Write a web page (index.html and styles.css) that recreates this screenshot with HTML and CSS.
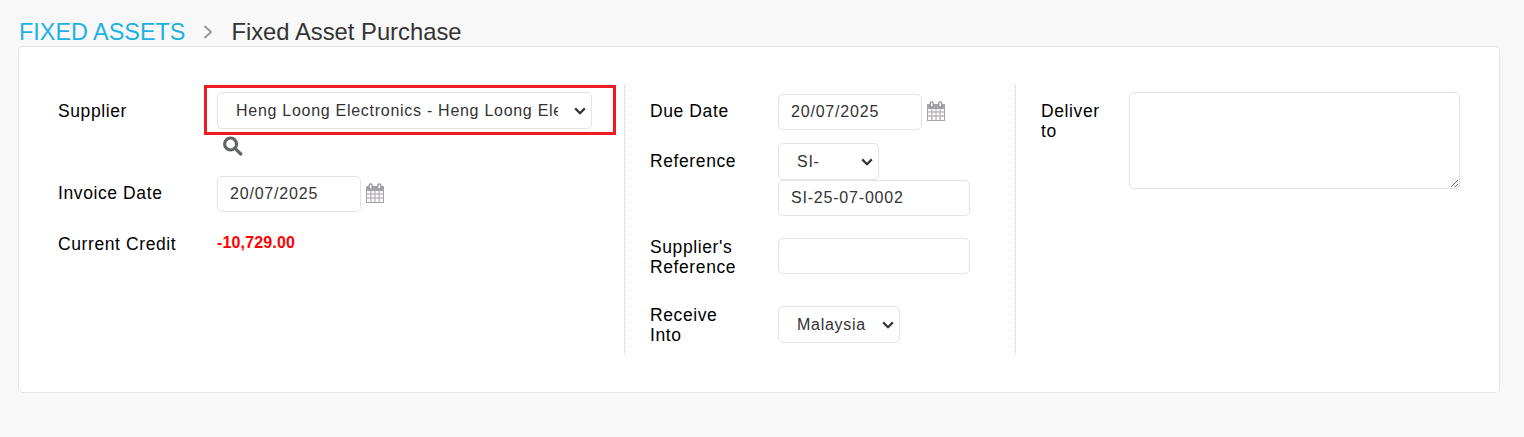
FILE: index.html
```html
<!DOCTYPE html>
<html lang="en">
<head>
  <meta charset="UTF-8">
  <meta name="viewport" content="width=device-width, initial-scale=1.0">
  <title>Fixed Asset Purchase</title>
  <link rel="stylesheet" href="styles.css">
</head>
<body>
  <div class="breadcrumb">
    <a class="crumb-link">FIXED ASSETS</a>
    <svg class="crumb-sep" width="10" height="14" viewBox="0 0 10 14"><path d="M1.5 1l6.5 6-6.5 6" fill="none" stroke="#999" stroke-width="2"/></svg>
    <span class="crumb-current">Fixed Asset Purchase</span>
  </div>

  <div class="card">
    <div class="columns">
      <div class="col col-left">
        <div class="field field-supplier">
          <label class="label">Supplier</label>
          <div class="control">
            <select class="input select-supplier">
              <option>Heng Loong Electronics - Heng Loong Electronics Sdn Bhd</option>
            </select>
            <div class="highlight"></div>
            <svg class="search-icon" width="20" height="20" viewBox="0 0 20 20"><circle cx="7.6" cy="8" r="6" fill="none" stroke="#626468" stroke-width="3.2"/><path d="M12.2 12.6l5.6 5.4" stroke="#626468" stroke-width="3.2" stroke-linecap="round"/></svg>
          </div>
        </div>
        <div class="field field-invoice">
          <label class="label">Invoice Date</label>
          <div class="control date-control">
            <input class="input input-date" type="text" value="20/07/2025">
            <svg class="cal-icon" width="20" height="20" viewBox="0 0 20 20"><use href="#cal"/></svg>
          </div>
        </div>
        <div class="field field-credit">
          <label class="label">Current Credit</label>
          <span class="credit">-10,729.00</span>
        </div>
      </div>

      <div class="col col-mid">
        <div class="field field-due">
          <label class="label">Due Date</label>
          <div class="control date-control">
            <input class="input input-date" type="text" value="20/07/2025">
            <svg class="cal-icon" width="20" height="20" viewBox="0 0 20 20"><use href="#cal"/></svg>
          </div>
        </div>
        <div class="field field-ref">
          <label class="label">Reference</label>
          <div class="control">
            <select class="input select-ref"><option>SI-</option></select>
            <input class="input input-ref" type="text" value="SI-25-07-0002">
          </div>
        </div>
        <div class="field field-supref">
          <label class="label">Supplier's Reference</label>
          <input class="input input-ref" type="text">
        </div>
        <div class="field field-receive">
          <label class="label">Receive Into</label>
          <select class="input select-receive"><option>Malaysia</option></select>
        </div>
      </div>

      <div class="col col-right">
        <div class="field field-deliver">
          <label class="label">Deliver to</label>
          <textarea class="input deliver-text"></textarea>
        </div>
      </div>
    </div>
  </div>

  <svg class="defs" width="0" height="0">
    <symbol id="cal" viewBox="0 0 20 20">
      <path d="M1 3h18v17H1z" fill="#a3a3a8"/>
      <path d="M2 8h3.4v2.6H2zM6.4 8h3.1v2.6H6.4zM10.5 8h3.1v2.6h-3.1zM14.6 8H18v2.6h-3.4zM2 11.6h3.4v2.8H2zM6.4 11.6h3.1v2.8H6.4zM10.5 11.6h3.1v2.8h-3.1zM14.6 11.6H18v2.8h-3.4zM2 15.4h3.4V19H2zM6.4 15.4h3.1V19H6.4zM10.5 15.4h3.1V19h-3.1zM14.6 15.4H18V19h-3.4z" fill="#fbf8f8"/>
      <rect x="4.2" y="0.8" width="3" height="5.4" rx="1.5" fill="#fff" stroke="#8f8f94" stroke-width="1.2"/>
      <rect x="12.8" y="0.8" width="3" height="5.4" rx="1.5" fill="#fff" stroke="#8f8f94" stroke-width="1.2"/>
    </symbol>
  </svg>
</body>
</html>
```

FILE: styles.css
```css
body {
  margin: 0;
  background-color: #f8f8f8;
  font-family: "Liberation Sans", Arial, sans-serif;
  color: #000;
}

.breadcrumb {
  display: flex;
  align-items: center;
  height: 46px;
  padding: 18px 0 0 19px;
  box-sizing: border-box;
  line-height: 28px;
}

.crumb-link {
  color: #1cb1e4;
  font-size: 23.4px;
}

.crumb-sep {
  margin: 0 18px 0 18px;
}

.crumb-current {
  color: #333;
  font-size: 23.8px;
}

.card {
  margin: 0 24px 0 18px;
  height: 347px;
  box-sizing: border-box;
  padding-top: 38px;
  background-color: #fff;
  border: 1px solid #e5e5e5;
  border-radius: 5px;
}

.columns {
  display: flex;
  height: 269px;
}

.col {
  box-sizing: border-box;
  padding-left: 25px;
}

.col-left {
  width: 605px;
  padding-left: 39px;
}

.col-mid {
  width: 392px;
  border-left: 1px dotted #c8c8c8;
  border-right: 1px dotted #c8c8c8;
}

.col-right {
  flex: 1;
}

.field {
  display: flex;
  align-items: flex-start;
}

.label {
  display: block;
  flex: none;
  box-sizing: border-box;
  font-size: 17.5px;
  line-height: 20px;
  letter-spacing: 0.6px;
}

.col-left .label {
  width: 159px;
}

.col-mid .label {
  width: 128px;
  padding-right: 28px;
}

.col-right .label {
  width: 88px;
  padding: 9px 20px 0 0;
}

.input {
  display: block;
  box-sizing: border-box;
  height: 36px;
  background-color: #fff;
  border: 1px solid #e3e3e3;
  border-radius: 5px;
  padding: 0 12px;
  color: #333;
  font-family: inherit;
  font-size: 16px;
  letter-spacing: 0.8px;
}

select.input {
  height: 37px;
  padding: 0 33px 0 18px;
  letter-spacing: 0.72px;
  appearance: none;
  background-image: url("data:image/svg+xml,%3Csvg xmlns='http://www.w3.org/2000/svg' width='12' height='8' viewBox='0 0 12 8'%3E%3Cpath d='M1.2 1.4L6 6.2l4.8-4.8' fill='none' stroke='%23333' stroke-width='2.2'/%3E%3C/svg%3E");
  background-repeat: no-repeat;
  background-position: right 5px center;
}

.control {
  position: relative;
}

.date-control {
  display: flex;
  align-items: flex-start;
  gap: 4px;
}

.cal-icon {
  margin-top: 7px;
}

/* red annotation box around the supplier dropdown */
.highlight {
  position: absolute;
  left: -13px;
  top: -7px;
  width: 406px;
  height: 44px;
  border: 3px solid #ed1c24;
}

.search-icon {
  display: block;
  margin: 7px 0 0 6px;
}

.select-supplier {
  width: 375px;
}

.input-date {
  width: 144px;
}

.select-ref {
  width: 101px;
}

.input-ref {
  width: 192px;
}

.select-receive {
  width: 122px;
}

.credit {
  color: #f00;
  font-size: 16px;
  font-weight: bold;
  line-height: 20px;
  letter-spacing: 0.15px;
}

.field-supplier {
  padding-top: 7px;
}

.field-supplier .label {
  padding-top: 9px;
}

.field-invoice {
  margin-top: 20px;
}

.field-invoice .label {
  padding-top: 7px;
}

.field-credit {
  margin-top: 21px;
}

.field-credit .label {
  padding-top: 1px;
}

.field-due {
  padding-top: 9px;
}

.field-due .label {
  padding-top: 7px;
}

.field-ref {
  margin-top: 13px;
}

.field-ref .label {
  padding-top: 8px;
}

.field-supref {
  margin-top: 22px;
}

.field-supref .label {
  margin-top: -1px;
}

.field-receive {
  margin-top: 29px;
}

.field-receive .label {
  margin-top: -1px;
}

.field-deliver {
  padding-top: 7px;
}

.deliver-text {
  width: 331px;
  height: 97px;
  margin: 0;
}

.defs {
  position: absolute;
}
```
